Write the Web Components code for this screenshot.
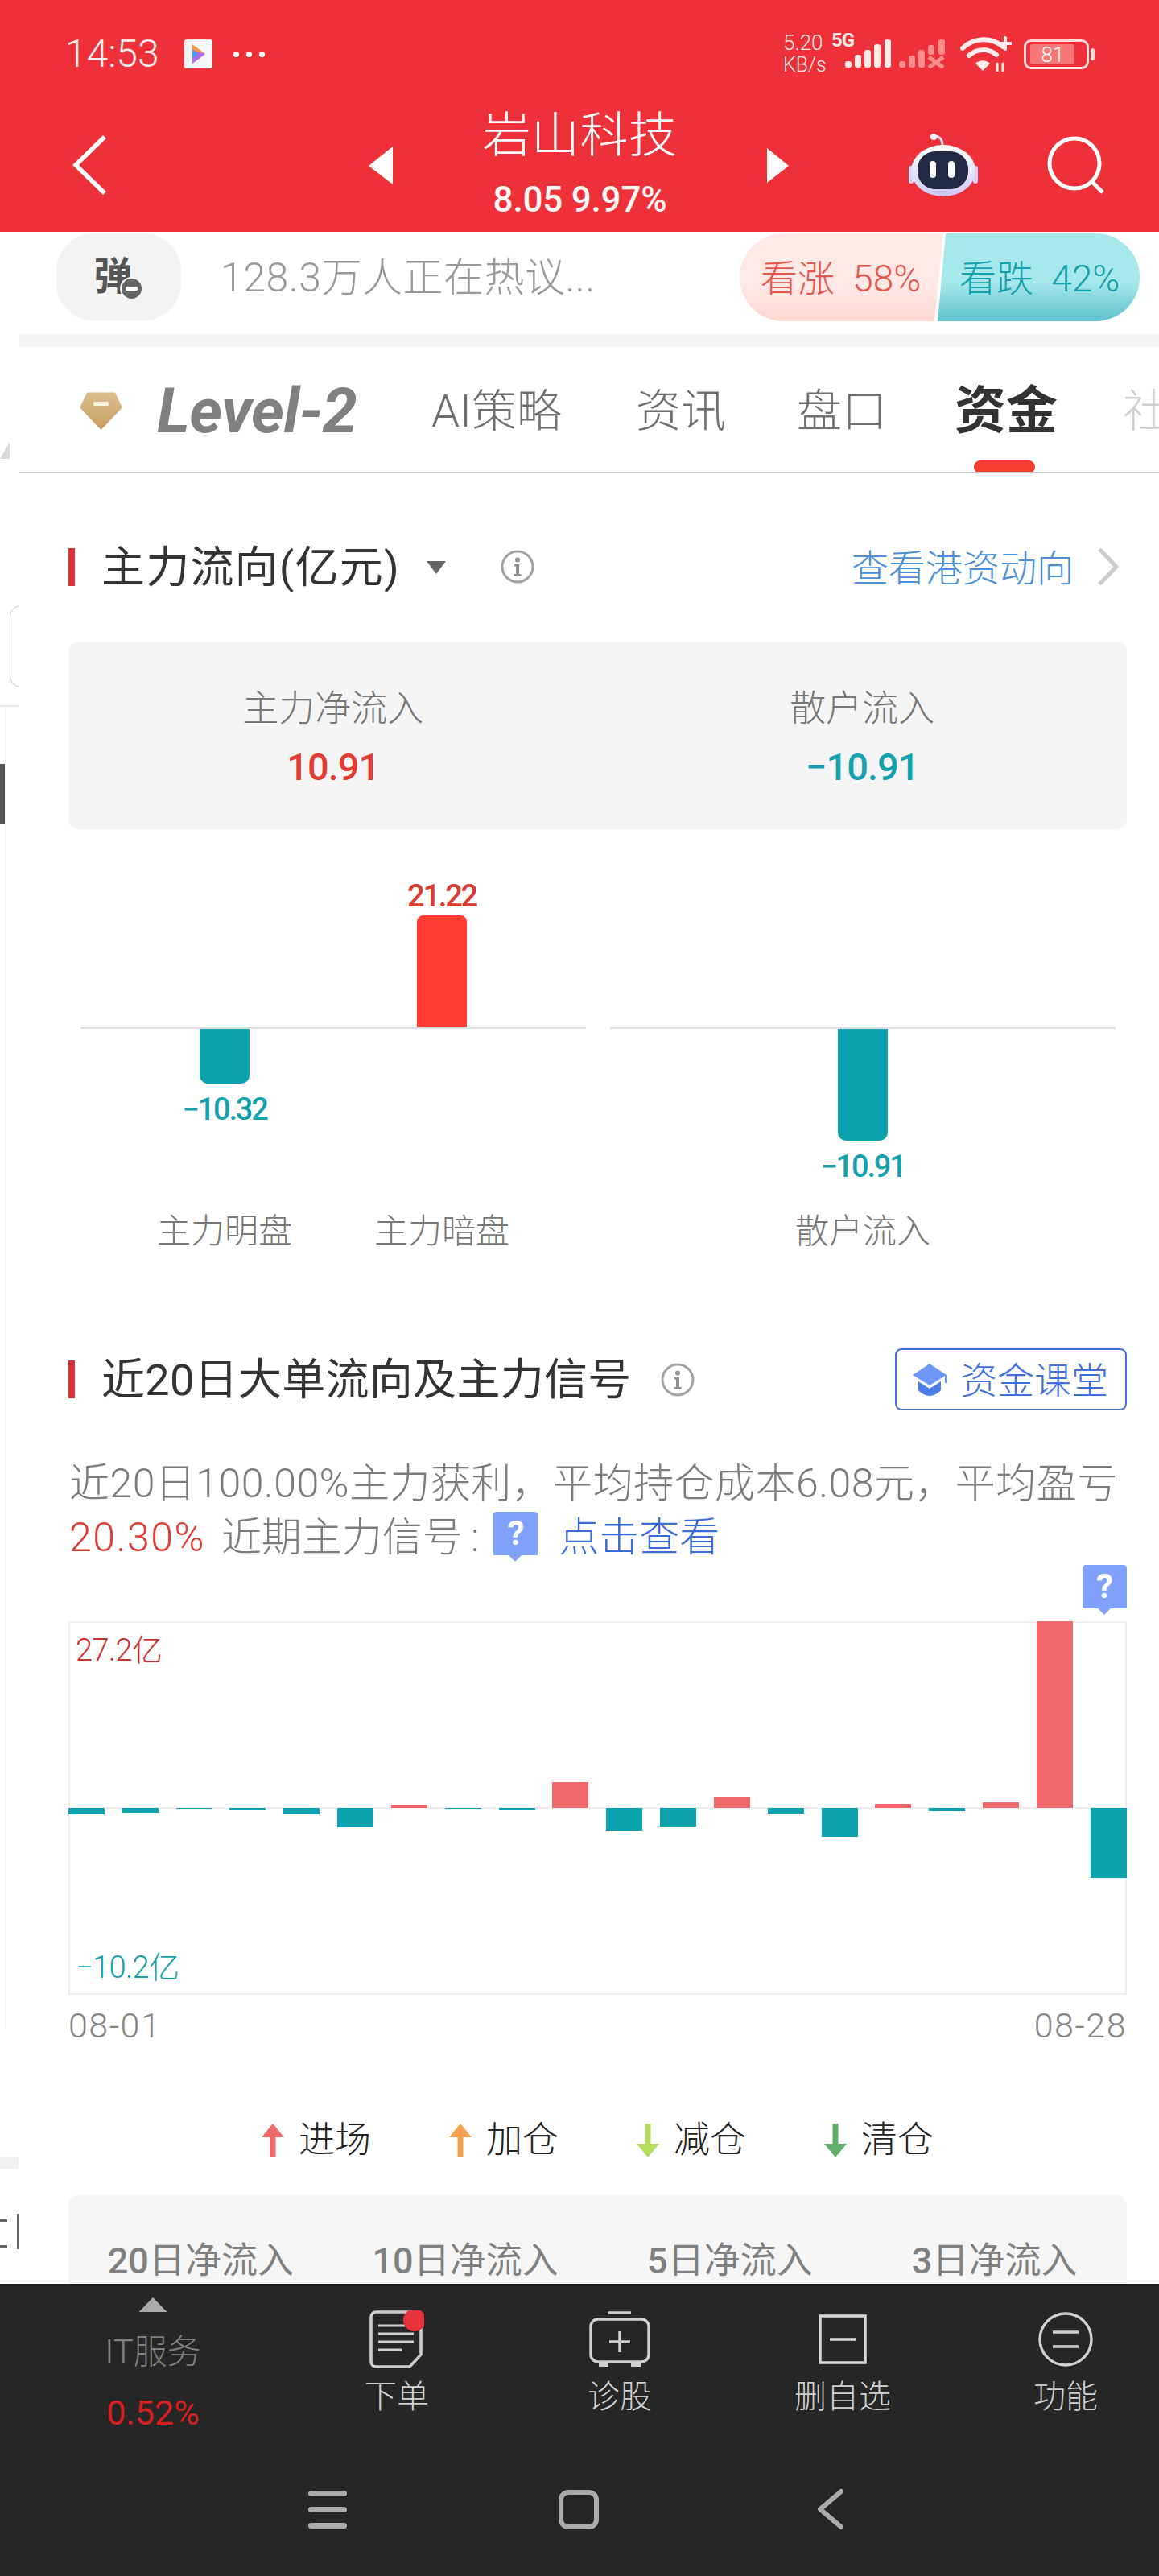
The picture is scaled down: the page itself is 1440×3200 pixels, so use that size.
<!DOCTYPE html>
<html lang="zh-CN">
<head>
<meta charset="utf-8">
<title>岩山科技</title>
<style>
html,body{margin:0;padding:0;background:#fff}
body{width:1440px;height:3200px;overflow:hidden;display:flex;flex-direction:column;position:relative;font-family:Roboto,"Noto Sans CJK SC",sans-serif;font-weight:300;color:#333}
</style>
</head>
<body>
<stock-header>
  <span slot="title">岩山科技</span>
  <span slot="sub">8.05 9.97%</span>
</stock-header>
<hot-bar></hot-bar>
<tab-strip></tab-strip>
<fund-page>
  <section-head style="margin-top:92px;height:48px">
    <span style="letter-spacing:1.2px">主力流向(亿元)</span>
    <caret-down slot="after" style="margin-left:32px"></caret-down>
    <info-icon slot="after" style="margin-left:67px"></info-icon>
    <link-more slot="action">查看港资动向</link-more>
  </section-head>
  <stat-card style="margin-top:69px"></stat-card>
  <flow-chart style="margin-top:60px"></flow-chart>
  <section-head style="margin-top:119px;height:77px">
    <span>近20日大单流向及主力信号</span>
    <info-icon slot="after" style="margin-left:36px"></info-icon>
    <class-button slot="action">资金课堂</class-button>
  </section-head>
  <signal-text style="margin-top:58px"></signal-text>
  <signal-chart></signal-chart>
  <signal-legend style="margin-top:86px"></signal-legend>
  <period-card style="margin-top:40px"></period-card>
</fund-page>
<dock-bar></dock-bar>
<edge-slivers></edge-slivers>

<script>
function def(name, css, html){
  customElements.define(name, class extends HTMLElement{
    connectedCallback(){
      if(this.shadowRoot) return;
      const r=this.attachShadow({mode:'open'});
      r.innerHTML='<style>'+css+'</style>'+(typeof html==='function'?html(this):html);
    }
  });
}

def('stock-header',`
:host{display:flex;flex-direction:column;height:288px;background:#ee3039;color:#fff;flex:none}
.status{height:130px;display:flex;align-items:center;padding:4px 0 0 81px;box-sizing:border-box}
.time{font-size:48px;font-weight:300;color:#ffeeee;width:148px;line-height:50px}
.app{width:35px;height:36px;background:#f6f6f6;border-radius:3px;display:flex;align-items:center;justify-content:center}
.dots{margin-left:26px;display:flex;gap:9px}
.dots i{width:7px;height:7px;border-radius:50%;background:#fff}
.right{margin-left:auto;display:flex;align-items:center;height:50px;position:relative}
.speed{font-size:26px;line-height:27px;width:60px;margin-left:0;font-weight:300;color:#ffeaea;display:flex;flex-direction:column}
.fiveg{font-size:24px;font-weight:700;align-self:flex-start;line-height:24px;margin-top:-4px;width:17px;white-space:nowrap;letter-spacing:-1px;color:#ffeaea}
.bat{margin-left:15px;margin-right:80px;display:flex;align-items:center;gap:2px}
.batbox{width:81px;height:37px;border:3px solid #ffd9d9;border-radius:9px;box-sizing:border-box;padding:3px 16px 3px 5px;display:flex}
.batfill{flex:1;background:#f77676;font-size:26px;line-height:26px;text-align:center;color:#fff;font-weight:300;padding-left:2px;border-radius:2px}
.battip{width:5px;height:15px;background:#ffd9d9;border-radius:3px}
.nav{height:158px;display:flex;padding-left:90px;align-items:center}
.nav>svg{flex:none;margin-bottom:8px}
.center{align-self:flex-start;width:465px;margin:0;text-align:center;flex:none}
.title{font-size:60px;line-height:78px;font-weight:300;white-space:nowrap;letter-spacing:.5px}
.sub{font-size:44px;line-height:64px;margin-top:8px;font-weight:500;letter-spacing:-.2px;color:#fff6f6;white-space:nowrap}
`,`
<div class="status">
  <span class="time">14:53</span>
  <span class="app"><svg width="20" height="26" viewBox="0 0 20 26"><path d="M2 1l16 12L2 25z" fill="#f59a3c"/><path d="M2 8l16 5L2 25z" fill="#b06cf0"/><path d="M2 8l7 5-7 5z" fill="#38a8f0"/></svg></span>
  <span class="dots"><i></i><i></i><i></i></span>
  <div class="right">
    <span class="speed"><span>5.20</span><span style="font-size:25px">KB/s</span></span>
    <span class="fiveg">5G</span>
    <svg width="57" height="36" viewBox="0 0 57 36" style="margin-top:0" fill="#ffeaea"><rect x="0" y="27" width="8" height="8" rx="3"/><rect x="12" y="19" width="8" height="16" rx="3"/><rect x="24" y="13" width="8" height="22" rx="3"/><rect x="36" y="6" width="8" height="29" rx="3"/><rect x="49" y="0" width="8" height="35" rx="3"/></svg>
    <svg width="57" height="36" viewBox="0 0 57 36" style="margin-left:10px" fill="#ff8d8d"><rect x="0" y="27" width="8" height="8" rx="3"/><rect x="12" y="20" width="8" height="15" rx="3"/><rect x="24" y="13" width="8" height="22" rx="3"/><rect x="36" y="7" width="8" height="12" rx="3"/><rect x="49" y="0" width="8" height="19" rx="3"/><path d="M37 22l18 13M55 22L37 35" stroke="#ff8d8d" stroke-width="5" fill="none"/></svg>
    <svg width="64" height="44" viewBox="0 0 64 44" style="margin-left:19px" fill="none" stroke="#ffecec" stroke-width="6" stroke-linecap="round"><path d="M3 15C17 1 39 1 53 13"/><path d="M11 24c10-9 24-9 34-1"/><path d="M28 43l-9-9c5-5 13-5 18 0z" fill="#ffecec" stroke="none"/><path d="M56 2v14M49 9h14" stroke-width="4"/><path d="M46 43v-9M53 43v-9" stroke-width="3"/></svg>
    <span class="bat"><span class="batbox"><span class="batfill">81</span></span><span class="battip"></span></span>
  </div>
</div>
<div class="nav">
  <svg width="42" height="74" viewBox="0 0 42 74" fill="none" stroke="#fff" stroke-width="5.5"><path d="M40 2L4 37l36 35"/></svg>
  <svg style="margin-left:326px" width="30" height="47" viewBox="0 0 30 47" fill="#fff"><path d="M30 0v47L0 24z"/></svg>
  <div class="center">
    <div class="title"><slot name="title"></slot></div>
    <div class="sub"><slot name="sub"></slot></div>
  </div>
  <svg width="27" height="43" viewBox="0 0 27 43" fill="#fff"><path d="M0 0v43l27-21z"/></svg>
  <svg style="margin-left:149px" width="86" height="78" viewBox="0 0 86 78">
    <defs><linearGradient id="h" x1="0" y1="0" x2="0" y2="1"><stop offset="0" stop-color="#ffffff"/><stop offset="1" stop-color="#cfc8f5"/></linearGradient></defs>
    <path d="M31 3c7 0 11 3 11 12" fill="none" stroke="#e6e2f8" stroke-width="3"/><circle cx="31" cy="4" r="4" fill="#f0eefb"/>
    <rect x="0" y="40" width="6" height="22" rx="3" fill="#d8d3f3"/><rect x="80" y="40" width="6" height="22" rx="3" fill="#d8d3f3"/>
    <ellipse cx="43" cy="46" rx="40" ry="32" fill="url(#h)"/>
    <rect x="11" y="22" width="63" height="47" rx="22" fill="#212a44"/>
    <rect x="26" y="34" width="8" height="21" rx="4" fill="#fff"/><rect x="49" y="34" width="8" height="21" rx="4" fill="#fff"/>
  </svg>
  <svg style="margin-left:86px" width="72" height="72" viewBox="0 0 72 72" fill="none" stroke="#fff" stroke-width="5"><ellipse cx="34" cy="34" rx="31" ry="31"/><path d="M55 56l14 14"/></svg>
</div>`);

def('hot-bar',`
:host{display:flex;flex:none;height:127px;padding:2px 24px 0 70px;box-sizing:border-box;align-items:flex-start}
.dan{width:155px;height:108px;border-radius:46px;background:#f3f3f3;position:relative;flex:none;text-align:center;font-size:48px;line-height:108px;font-weight:700;color:#555}
.dan span{margin-left:-14px}
.minus{position:absolute;left:81px;top:56px;width:25px;height:25px;border-radius:50%;background:#666;display:flex;align-items:center;justify-content:center;box-shadow:0 0 0 2px #f3f3f3}
.minus i{width:15px;height:5px;background:#fff;border-radius:2px}
.txt{margin-left:49px;font-size:50px;line-height:110px;color:#999;font-weight:300;white-space:nowrap;letter-spacing:.5px}
.pill{margin-left:auto;width:497px;height:109px;border-radius:55px;overflow:hidden;display:flex;flex:none}
.pill span{display:block;height:109px;line-height:113px;font-size:46px;word-spacing:11px;white-space:nowrap;box-sizing:border-box;font-weight:300}
.up{width:253px;padding-left:26px;color:#e6544a;background:linear-gradient(#ffe9e6 60%,#ffd6d1);clip-path:polygon(0 0,100% 0,95.6% 100%,0 100%)}
.dn{width:251px;margin-left:-7px;padding-left:27px;color:#12a2ad;background:linear-gradient(#a7e8ea 55%,#5fc2ce);clip-path:polygon(10px 0,100% 0,100% 100%,0 100%)}
`,`
<div class="dan"><span>弹</span><div class="minus"><i></i></div></div>
<div class="txt">128.3万人正在热议...</div>
<div class="pill"><span class="up">看涨 58%</span><span class="dn">看跌 42%</span></div>`);

def('tab-strip',`
:host{display:block;flex:none;margin-left:24px;background:#fff;border-top:16px solid #f5f5f5;border-bottom:2px solid #cfcfcf;height:155px;box-sizing:content-box;overflow:hidden;position:relative}
.row{display:flex;align-items:center;height:155px;white-space:nowrap;font-size:56px;color:#6f6f6f;font-weight:300}
.row>*{flex:none;line-height:70px;margin-top:4px}
.gem{margin-left:75px}
.lv{margin-left:43px;font-size:78px;font-style:italic;font-weight:700;color:#808080;letter-spacing:-.7px;width:251px}
.ai{margin-left:90px}
.t2{margin-left:92px}
.t3{margin-left:88px}
.on{margin-left:84px;font-size:64px;font-weight:700;color:#333;position:relative}
.on::after{content:"";position:absolute;left:24px;width:76px;height:16px;border-radius:8px;background:#f63d32;top:96px}
.she{margin-left:81px;color:#cfcfcf}
`,`
<div class="row">
<svg class="gem" width="53" height="48" viewBox="0 0 53 48"><defs><linearGradient id="g" x1="0" y1="0" x2="0" y2="1"><stop offset="0" stop-color="#dcbc8e"/><stop offset="1" stop-color="#c99f62"/></linearGradient></defs><path d="M10 2h33l8 17-24.500 26L2 19z" fill="url(#g)" stroke="url(#g)" stroke-width="3" stroke-linejoin="round"/><rect x="17" y="12" width="19" height="5" rx="2" fill="#fff4e2"/></svg>
<span class="lv">Level-2</span>
<span class="ai">AI策略</span>
<span class="t2">资讯</span>
<span class="t3">盘口</span>
<span class="on">资金</span>
<span class="she">社</span>
</div>`);

def('fund-page',`
:host{display:flex;flex-direction:column;flex:1;min-height:0;overflow:hidden;padding:0 40px 0 85px;background:#fff}
`,`<slot></slot>`);

def('section-head',`
:host{display:flex;align-items:center;flex:none}
.bar{width:8px;height:47px;background:#e03035;flex:none}
.t{margin-left:33px;padding-top:3px;font-size:54px;line-height:56px;color:#333;font-weight:400;white-space:nowrap;letter-spacing:.3px}
.a{margin-left:auto;display:flex;align-items:center}
`,`<span class="bar"></span><span class="t"><slot></slot></span><slot name="after"></slot><span class="a"><slot name="action"></slot></span>`);

def('caret-down',`:host{display:inline-flex;margin-top:2px}`,`<svg width="26" height="16" viewBox="0 0 26 16" fill="#666"><path d="M1 0h24L13 16z"/></svg>`);
def('info-icon',`:host{display:inline-flex}`,`<svg width="42" height="42" viewBox="0 0 42 42"><circle cx="21" cy="21" r="19" fill="none" stroke="#a2a2a2" stroke-width="3"/><circle cx="21" cy="12.500" r="3" fill="#8e8e8e"/><path d="M17 18h6v12h2.500v2.500h-9V30H19V20.500h-2z" fill="#8e8e8e"/></svg>`);
def('link-more',`
:host{display:inline-flex;align-items:center;font-size:46px;line-height:56px;color:#4a8fd8;font-weight:300;margin-right:10px}
span{padding-top:3px}
svg{margin-left:30px}
`,`<span><slot></slot></span><svg width="26" height="46" viewBox="0 0 26 46" fill="none" stroke="#cdcdcd" stroke-width="5"><path d="M2 1l21 22L2 45"/></svg>`);
def('class-button',`
:host{display:flex;align-items:center;width:288px;height:77px;box-sizing:border-box;border:2.500px solid #4472d6;border-radius:8px;padding-left:20px;font-size:46px;color:#3f70de;font-weight:300;white-space:nowrap}
svg{margin-right:17px;flex:none}
.x{margin-top:-6px;margin-left:-1px}
`,`<svg width="43" height="40" viewBox="0 0 43 40"><path d="M21 0l21 14-21 13L0 14z" fill="#6f97f7"/><path d="M7 22l14 9 14-9v11c-4 4-9 7-14 7S11 37 7 33z" fill="#4a7be8"/><path d="M41 14v10" stroke="#6f97f7" stroke-width="2"/></svg><span class="x"><slot></slot></span>`);

def('stat-card',`
:host{display:grid;grid-template-columns:1fr 1fr;height:233px;background:#f5f5f5;border-radius:12px;flex:none;text-align:center;padding-top:57px;box-sizing:border-box}
.l{font-size:45px;line-height:54px;color:#777;font-weight:300}
.v{font-size:47px;line-height:54px;margin-top:18px;font-weight:500;letter-spacing:-1px}
.r{color:#e23b32}.g{color:#12a1ad}
`,`<div><div class="l">主力净流入</div><div class="v r">10.91</div></div><div><div class="l">散户流入</div><div class="v g">−10.91</div></div>`);

def('flow-chart',`
:host{display:grid;grid-template-columns:628px 628px;column-gap:30px;padding:0 0 0 15px;flex:none}
.g{display:flex;flex-direction:column}
.top,.bot,.lab{display:grid;padding:0 44px}
.top{height:186px;border-bottom:2px solid #dedede;align-items:end}
.bot{height:222px;align-items:start}
.lab{height:56px}
.c{display:flex;flex-direction:column;align-items:center;font-size:38px;line-height:38px;font-weight:500;letter-spacing:-2.2px;white-space:nowrap}
.bar{width:62px}
.red{color:#d93a32}.red .bar{background:#ff3d33;border-radius:8px 8px 0 0;margin-top:5px}
.teal{color:#12a1ad}.teal .bar{background:#0ca3af;border-radius:0 0 10px 10px;margin-bottom:13px}
.n{text-align:center;font-size:42px;line-height:60px;color:#777;font-weight:300;white-space:nowrap}
`,`
<div class="g">
  <div class="top" style="grid-template-columns:270px 270px"><div></div><div class="c red">21.22<div class="bar" style="height:139px"></div></div></div>
  <div class="bot" style="grid-template-columns:270px 270px"><div class="c teal"><div class="bar" style="height:68px"></div>−10.32</div><div></div></div>
  <div class="lab" style="grid-template-columns:270px 270px"><div class="n">主力明盘</div><div class="n">主力暗盘</div></div>
</div>
<div class="g">
  <div class="top"></div>
  <div class="bot"><div class="c teal"><div class="bar" style="height:139px"></div>−10.91</div></div>
  <div class="lab"><div class="n">散户流入</div></div>
</div>`);

def('q-pin',`
:host{display:inline-block;width:55px;height:62px;vertical-align:middle;position:relative;background:linear-gradient(#7fa0fb,#7fa0fb) top/100% 54px no-repeat;border-radius:4px 4px 0 0;text-align:center;font-size:42px;line-height:54px;font-weight:700;color:#fff;font-family:Roboto,sans-serif}
:host::after{content:"";position:absolute;left:19px;top:54px;border:8px solid transparent;border-top-color:#7fa0fb;border-bottom:0}
`,`<slot></slot>`);

def('signal-text',`
:host{display:block;font-size:50px;line-height:67px;color:#7c7c7c;font-weight:300;white-space:nowrap;flex:none;margin-left:1px}
.l1{letter-spacing:.45px}
.r{color:#e23b32;margin-right:20px;letter-spacing:1.5px}.b{color:#3a6bd8;margin-left:26px}
.col{margin-left:10px}
q-pin{margin:-10px 0 0 18px;font-size:42px;letter-spacing:0}
`,`<div class="l1">近20日100.00%主力获利，平均持仓成本6.08元，平均盈亏</div><div><span class="r">20.30%</span>近期主力信号<span class="col">:</span><q-pin>?</q-pin><span class="b">点击查看</span></div>`);

def('signal-chart',`
:host{display:block;flex:none}
.pinrow{display:flex;justify-content:flex-end;height:70px}
.frame{position:relative;height:464px;box-shadow:inset 0 0 0 2px #eee;display:flex;justify-content:space-between}
.col{width:45px;display:flex;flex-direction:column;position:relative}
.u{height:232px;display:flex;align-items:flex-end}
.d{height:232px}
.u i{display:block;width:100%;background:#f0686a}
.d i{display:block;width:100%;background:#0ca3af}
.base{position:absolute;left:0;right:0;top:231px;height:2px;background:#eee}
.lab{position:absolute;left:9px;font-size:38px;line-height:40px;font-weight:300;letter-spacing:-.6px;white-space:nowrap}
.dates{display:flex;justify-content:space-between;margin-top:13px;font-size:43px;line-height:50px;color:#858585;font-weight:300;letter-spacing:1.5px}
`,()=>{
  const v=[-8.4,-6,-1,-1.5,-8.4,-24,4,-1,-2.3,32.5,-28,-23,14,-7,-36,5,-4,7.3,232,-87];
  const cols=v.map(n=>`<div class="col"><div class="u">${n>0?`<i style="height:${n}px"></i>`:''}</div><div class="d">${n<0?`<i style="height:${-n}px"></i>`:''}</div></div>`).join('');
  return `<div class="pinrow"><q-pin>?</q-pin></div><div class="frame"><div class="base"></div>${cols}<div class="lab" style="top:16px;color:#cf3030">27.2亿</div><div class="lab" style="top:410px;color:#12a1ad">−10.2亿</div></div><div class="dates"><span>08-01</span><span>08-28</span></div>`;
});

def('signal-legend',`
:host{display:flex;justify-content:center;gap:97px;flex:none;font-size:45px;line-height:60px;color:#222;font-weight:300;padding-top:2px;margin-bottom:-2px}
span{display:inline-flex;align-items:center;gap:18px;white-space:nowrap}
`,()=>{
  const up=c=>`<svg width="28" height="42" viewBox="0 0 28 42"><path d="M14 0l14 17h-10.500v25h-7V17H0z" fill="${c}"/></svg>`;
  const dn=c=>`<svg width="28" height="42" viewBox="0 0 28 42"><path d="M14 42L0 25h10.500V0h7v25H28z" fill="${c}"/></svg>`;
  return `<span>${up('#f0686a')}进场</span><span>${up('#f8a14d')}加仓</span><span>${dn('#b5dd5e')}减仓</span><span>${dn('#5fb06a')}清仓</span>`;
});

def('period-card',`
:host{display:grid;grid-template-columns:repeat(4,1fr);height:200px;background:#f6f6f6;border-radius:12px 12px 0 0;flex:none;padding-top:57px;box-sizing:border-box;text-align:center;font-size:45px;line-height:50px;color:#808080;font-weight:400;white-space:nowrap}
b{font-weight:500}
`,`<div><b>20</b>日净流入</div><div><b>10</b>日净流入</div><div><b>5</b>日净流入</div><div><b>3</b>日净流入</div>`);

def('dock-item',`
:host{display:flex;flex-direction:column;align-items:center;width:130px;font-size:40px;line-height:50px;color:#cfcfcf;font-weight:300;white-space:nowrap}
.ic{height:72px;display:flex;align-items:center;justify-content:center;margin-bottom:11px}
`,`<div class="ic"><slot name="icon"></slot></div><slot></slot>`);

def('dock-bar',`
:host{display:block;height:363px;background:#262626;flex:none}
.tabs{height:243px;display:flex;align-items:flex-start;padding:33px 0 0 70px;box-sizing:border-box}
.sec{width:240px;margin:-33px 118px 0 0;text-align:center;font-size:42px;line-height:50px;font-weight:300;color:#808080}
.tri{width:35px;height:18px;margin:17px auto 25px;background:#aaa;clip-path:polygon(50% 0,100% 100%,0 100%)}
.p{color:#d81e1e;margin-top:25px;font-weight:400;font-size:43px}
.items{display:flex;gap:147px}
.sys{height:74px;display:flex;align-items:center;padding-left:383px}
.ham{width:48px;display:flex;flex-direction:column;gap:13px}
.ham i{height:7px;background:#aaa;border-radius:4px}
.home{width:50px;height:49px;box-sizing:border-box;border:6px solid #aaa;border-radius:12px;margin-left:263px}
.back{margin-left:272px}
`,`
<div class="tabs">
  <div class="sec"><div class="tri"></div><div>IT服务</div><div class="p">0.52%</div></div>
  <div class="items">
  <dock-item><svg slot="icon" width="68" height="72" viewBox="0 0 68 72" fill="none" stroke="#cfcfcf" stroke-width="3.500"><path d="M8 2h50a6 6 0 0 1 6 6v47L50 70H8a6 6 0 0 1-6-6V8a6 6 0 0 1 6-6z"/><path d="M11 19h40M11 29h44M11 39h44M11 49h30" stroke-width="3"/><circle cx="56" cy="12" r="14" fill="#e8333a" stroke="none"/></svg>下单</dock-item>
  <dock-item><svg slot="icon" width="76" height="70" viewBox="0 0 76 70" fill="none" stroke="#cfcfcf" stroke-width="3.500"><path d="M24 2h28" /><rect x="2" y="10" width="72" height="53" rx="9"/><path d="M38 25v26M25 38h26"/><path d="M12 66h12M52 66h12" stroke-width="6"/></svg>诊股</dock-item>
  <dock-item><svg slot="icon" width="60" height="62" viewBox="0 0 60 62" fill="none" stroke="#d8d8d8" stroke-width="3.500"><rect x="2" y="2" width="56" height="58"/><path d="M14 31h32"/></svg>删自选</dock-item>
  <dock-item><svg slot="icon" width="68" height="68" viewBox="0 0 68 68" fill="none" stroke="#cfcfcf" stroke-width="3.500"><circle cx="34" cy="34" r="32"/><path d="M18 25h32M18 43h32"/></svg>功能</dock-item>
  </div>
</div>
<div class="sys">
  <div class="ham"><i></i><i></i><i></i></div>
  <div class="home"></div>
  <svg class="back" width="32" height="50" viewBox="0 0 32 50" fill="none" stroke="#aaa" stroke-width="6" stroke-linecap="round" stroke-linejoin="round"><path d="M29 3L3 25l26 22"/></svg>
</div>`);

def('edge-slivers',`
:host{position:absolute;left:0;top:0;width:24px;height:2837px;overflow:hidden;pointer-events:none}
div{position:absolute}
.tri{left:0;top:549px;width:12px;height:21px;background:#d9d9d9;clip-path:polygon(100% 0,100% 100%,0 100%)}
.box{left:12px;top:752px;width:40px;height:100px;border:1.500px solid #c8c8c8;border-radius:14px}
.ln{left:0;top:876px;width:24px;height:2px;background:#e8e8e8}
.dark{left:0;top:949px;width:7px;height:75px;background:#555}
.v{left:6px;top:880px;width:2px;height:1640px;background:#f0f0f0}
.strip{left:0;top:2679px;width:23px;height:15px;background:#f1f1f1}
.a{left:0;top:2757px;width:9px;height:3px;background:#666}
.b{left:0;top:2789px;width:9px;height:3px;background:#666}
.c{left:21px;top:2750px;width:2px;height:44px;background:#666}
`,`<div class="tri"></div><div class="box"></div><div class="ln"></div><div class="dark"></div><div class="v"></div><div class="strip"></div><div class="a"></div><div class="b"></div><div class="c"></div>`);
</script>
</body>
</html>
